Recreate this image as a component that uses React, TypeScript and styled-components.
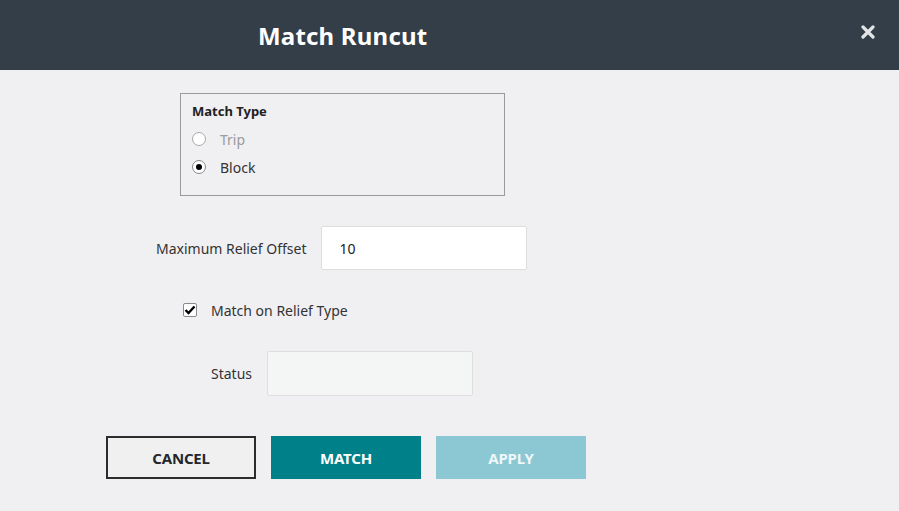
import React, { useState } from 'react';
import styled, { createGlobalStyle } from 'styled-components';

const GlobalStyle = createGlobalStyle`
  html, body {
    margin: 0;
    padding: 0;
    background: #f0f0f2;
    font-family: 'Noto Sans', 'Open Sans', sans-serif;
  }
  #root {
    min-height: 100vh;
  }
`;

const Dialog = styled.div`
  min-height: 100vh;
  background: #f0f0f2;
  display: flex;
  flex-direction: column;
`;

const Header = styled.header`
  height: 70px;
  background: #343e48;
  display: flex;
  align-items: center;
  justify-content: space-between;
  padding: 0 22px 0 258px;
  box-sizing: border-box;
`;

const Title = styled.h1`
  margin: 0;
  color: #fff;
  font-size: 24px;
  font-weight: 700;
  letter-spacing: 0.2px;
`;

const CloseButton = styled.button`
  width: 18px;
  height: 18px;
  padding: 0;
  border: none;
  background: transparent;
  display: flex;
  align-items: center;
  justify-content: center;
  cursor: pointer;
  margin-top: -6px;
`;

const Body = styled.div`
  display: flex;
  flex-direction: column;
  padding-top: 23px;
`;

const Group = styled.fieldset`
  margin: 0 0 0 180px;
  width: 325px;
  height: 103px;
  box-sizing: border-box;
  border: 1px solid #9a9a9a;
  padding: 9px 11px;
  display: flex;
  flex-direction: column;
`;

const GroupTitle = styled.div`
  font-size: 13px;
  font-weight: 700;
  color: #222;
  line-height: 16px;
  margin-bottom: 6px;
`;

const RadioRow = styled.label<{ disabled?: boolean }>`
  display: flex;
  align-items: center;
  gap: 14px;
  height: 28px;
  font-size: 14px;
  color: ${({ disabled }) => (disabled ? '#9b9b9b' : '#333')};
  cursor: pointer;
`;

const RadioDot = styled.span<{ checked: boolean; disabled?: boolean }>`
  width: 14px;
  height: 14px;
  box-sizing: border-box;
  border-radius: 50%;
  border: 1px solid ${({ disabled }) => (disabled ? '#a8a8a8' : '#888')};
  background: #fff;
  display: flex;
  align-items: center;
  justify-content: center;
  &::after {
    content: '';
    width: 6px;
    height: 6px;
    border-radius: 50%;
    background: ${({ checked }) => (checked ? '#000' : 'transparent')};
  }
`;

const FieldRow = styled.div<{ indent: number; top: number }>`
  display: flex;
  align-items: center;
  gap: 15px;
  margin: ${({ top }) => top}px 0 0 ${({ indent }) => indent}px;
`;

const FieldLabel = styled.span`
  font-size: 14px;
  color: #333;
`;

const TextInput = styled.input<{ readOnlyLook?: boolean }>`
  width: 206px;
  height: ${({ readOnlyLook }) => (readOnlyLook ? 45 : 44)}px;
  box-sizing: border-box;
  border: 1px solid #dedede;
  border-radius: 2px;
  background: ${({ readOnlyLook }) => (readOnlyLook ? '#f4f5f5' : '#fff')};
  padding: 0 17px;
  font-family: inherit;
  font-size: 14px;
  color: #222;
  outline: none;
`;

const CheckRow = styled.label`
  display: flex;
  align-items: center;
  gap: 14px;
  height: 20px;
  margin: 30px 0 0 183px;
  font-size: 14px;
  color: #333;
  cursor: pointer;
`;

const CheckBox = styled.span`
  width: 14px;
  height: 14px;
  box-sizing: border-box;
  border: 1px solid #8a8a8a;
  border-radius: 2px;
  background: #fff;
  display: flex;
  align-items: center;
  justify-content: center;
`;

const Actions = styled.div`
  display: flex;
  gap: 15px;
  margin: 40px 0 0 106px;
`;

const ActionButton = styled.button<{ variant: 'outline' | 'primary' | 'disabled' }>`
  width: 150px;
  height: 43px;
  box-sizing: border-box;
  font-family: inherit;
  font-size: 15px;
  font-weight: 700;
  letter-spacing: -0.2px;
  cursor: ${({ variant }) => (variant === 'disabled' ? 'default' : 'pointer')};
  border: ${({ variant }) => (variant === 'outline' ? '2px solid #2c2c2c' : 'none')};
  background: ${({ variant }) =>
    variant === 'outline' ? '#f0f0f0' : variant === 'primary' ? '#00818a' : '#8cc7d4'};
  color: ${({ variant }) =>
    variant === 'outline' ? '#23272c' : variant === 'primary' ? '#fff' : '#eef7f9'};
`;

const App: React.FC = () => {
  const [matchType, setMatchType] = useState<'trip' | 'block'>('block');
  const [offset, setOffset] = useState('10');
  const [reliefType, setReliefType] = useState(true);

  return (
    <Dialog>
      <GlobalStyle />
      <Header>
        <Title>Match Runcut</Title>
        <CloseButton aria-label="Close">
          <svg width="14" height="14" viewBox="0 0 14 14">
            <path d="M2 2 L12 12 M12 2 L2 12" stroke="#e2e4e6" strokeWidth="3.2" strokeLinecap="round" />
          </svg>
        </CloseButton>
      </Header>
      <Body>
        <Group>
          <GroupTitle>Match Type</GroupTitle>
          <RadioRow disabled onClick={() => setMatchType('trip')}>
            <RadioDot checked={matchType === 'trip'} disabled />
            Trip
          </RadioRow>
          <RadioRow onClick={() => setMatchType('block')}>
            <RadioDot checked={matchType === 'block'} />
            Block
          </RadioRow>
        </Group>

        <FieldRow indent={156} top={30}>
          <FieldLabel>Maximum Relief Offset</FieldLabel>
          <TextInput value={offset} onChange={e => setOffset(e.target.value)} />
        </FieldRow>

        <CheckRow onClick={() => setReliefType(!reliefType)}>
          <CheckBox>
            {reliefType && (
              <svg width="12" height="10" viewBox="0 0 12 10">
                <path d="M1.5 5 L4.5 8 L10.5 1.5" fill="none" stroke="#000" strokeWidth="2.4" />
              </svg>
            )}
          </CheckBox>
          Match on Relief Type
        </CheckRow>

        <FieldRow indent={211} top={31}>
          <FieldLabel>Status</FieldLabel>
          <TextInput readOnlyLook readOnly value="" />
        </FieldRow>

        <Actions>
          <ActionButton variant="outline">CANCEL</ActionButton>
          <ActionButton variant="primary">MATCH</ActionButton>
          <ActionButton variant="disabled" disabled>APPLY</ActionButton>
        </Actions>
      </Body>
    </Dialog>
  );
};

export default App;
